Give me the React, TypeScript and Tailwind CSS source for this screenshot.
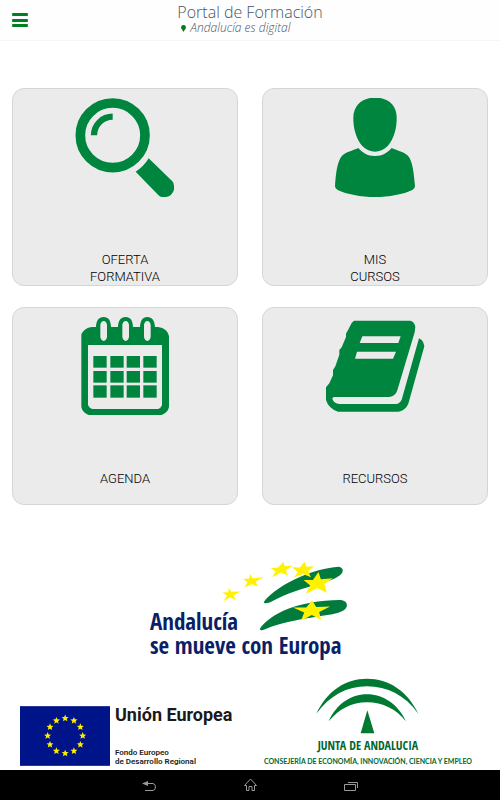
import type { ReactNode } from "react";

const GREEN = "#00853e";

function starPoints(cx: number, cy: number, r: number, tilt = 0, inner = 0.4) {
  return Array.from({ length: 10 }, (_, i) => {
    const a = ((i * 36 - 90 + tilt) * Math.PI) / 180;
    const d = i % 2 ? r * inner : r;
    return `${(cx + d * Math.cos(a)).toFixed(1)},${(cy + d * Math.sin(a)).toFixed(1)}`;
  }).join(" ");
}

function SearchIcon() {
  return (
    <svg viewBox="0 12 390 363" className="h-[121px] w-[130px]" fill={GREEN} aria-hidden="true">
      <circle cx="158" cy="151" r="97" fill="none" stroke={GREEN} strokeWidth="29" />
      <path d="M102 151a56 56 0 0 1 56-56" fill="none" stroke={GREEN} strokeWidth="19" />
      <path d="M266 220 337 289Q342 294 342 303V314Q337 332 318 336H306Q300 336 294 329L227 260Q252 244 266 220Z" />
    </svg>
  );
}

function UserIcon() {
  return (
    <svg viewBox="0 12 390 363" className="h-[121px] w-[130px]" fill={GREEN} aria-hidden="true">
      <path d="M180 39H211C240 44 260 66 260 96C261 128 252 162 233 183C222 195 208 200 195 200C182 200 168 195 157 183C138 162 129 128 130 96C131 66 151 44 180 39Z" />
      <path d="M145 189C158 203 171 213 195 213C219 213 232 203 245 189C263 197 282 201 294 212C309 230 312 270 315 304Q315 311 307 315C280 328 238 336 195 336C152 336 110 328 83 315Q75 311 75 304C77 270 81 230 96 212C108 201 127 197 145 189Z" />
    </svg>
  );
}

function CalendarIcon() {
  return (
    <svg viewBox="0 9 390 363" className="h-[121px] w-[130px]" fill={GREEN} aria-hidden="true">
      <path
        fillRule="evenodd"
        d="M108 66C109 47 116 36 131 36S152 47 153 66H174C175 47 182 36 197 36S218 47 219 66H240C241 47 248 36 262 36S284 47 285 66H294C313 68 324 79 327 94V306C325 317 315 327 304 330H87C76 327 66 317 64 306V88C69 77 80 67 97 66ZM84 120V299Q87 309 98 312H293Q304 309 306 299V120ZM121 59V96Q123 107 131 108Q139 107 141 96V59Q139 49 131 48Q123 49 121 59ZM187 59V96Q189 107 197 108Q205 107 207 96V59Q205 49 197 48Q189 49 187 59ZM252 59V96Q254 107 262 108Q270 107 272 96V59Q270 49 262 48Q254 49 252 59Z"
      />
      {[153, 198, 241].map((y) =>
        [100, 151, 200, 250].map((x) => (
          <rect key={`${x}-${y}`} x={x} y={y} width="40" height={y === 241 ? 37 : 35} />
        )),
      )}
    </svg>
  );
}

function BookIcon() {
  return (
    <svg viewBox="0 9 390 363" className="h-[121px] w-[130px]" fill={GREEN} aria-hidden="true">
      <path
        fillRule="evenodd"
        d="M132 47H301Q313 50 316 65L314 82 262 256Q256 274 238 276H72Q66 277 67 282Q72 295 88 297H258Q269 296 275 284L327 100Q340 105 343 124L295 296Q286 316 266 320H84Q55 310 48 285V247L58 235 69 211V195L76 184 88 149V135L95 127 108 96V86Q116 72 125 54ZM157 94 149 114H265L272 94ZM141 140 135 161H249L258 140Z"
      />
    </svg>
  );
}

function Tile({ icon, children }: { icon: ReactNode; children: ReactNode }) {
  return (
    <button
      type="button"
      className="flex h-[198px] flex-col items-center rounded-xl border border-[#d3d6d9] bg-[#ebebeb] text-[13px] leading-[17px] font-light text-black"
    >
      {icon}
      <span className="mt-[41px]">{children}</span>
    </button>
  );
}

function AndaluciaLogo() {
  return (
    <div className="relative mx-auto h-[100px] w-[200px] pt-[51px] font-['Open_Sans_Condensed','Open_Sans',sans-serif] text-[23px] leading-6 font-bold whitespace-nowrap text-[#0b1f66]">
      <svg
        viewBox="240 25 390 220"
        className="absolute top-0 right-0 h-[73px] w-[130px]"
        aria-hidden="true"
      >
        <path
          d="M371 158C382 140 415 113 465 89C515 65 561 53 597 51Q613 54 608 68C602 80 580 91 548 100C490 116 440 130 389 159Q372 164 371 158Z"
          fill="#007a3d"
        />
        <path
          d="M359 239C370 220 398 199 430 184C480 162 550 151 607 152Q624 156 621 171C618 184 594 192 568 196C500 207 427 216 375 240Q361 246 359 239Z"
          fill="#007a3d"
        />
        <g fill="#fff200">
          <polygon points="265,115 273,127 302,126 280,137 286,151 269,144 249,155 260,139 246,129 264,128" />
          <polygon points="330,73 338,86 371,83 347,96 352,110 334,104 312,114 322,99 309,88 327,87" />
          <polygon points="430,36 434,50 459,48 438,61 443,78 423,69 396,83 407,66 392,56 414,54" />
          <polygon points="494,36 499,51 523,50 505,64 513,83 489,73 462,84 474,67 456,53 480,54" />
          <polygon points="536,67 543,89 579,86 554,103 561,130 533,116 498,133 511,108 491,91 519,91" />
          <polygon points="517,153 529,173 571,171 538,188 544,212 516,197 483,214 493,189 459,174 499,174" />
        </g>
      </svg>
      <p>
        Andalucía
        <br />
        se mueve con Europa
      </p>
    </div>
  );
}

function EuropeanUnionLogo() {
  return (
    <div className="flex h-[60px] gap-[5px]">
      <svg viewBox="0 0 267 177" className="h-[60px] w-[90px] shrink-0" aria-hidden="true">
        <rect width="267" height="177" fill="#001489" />
        {Array.from({ length: 12 }, (_, i) => {
          const a = (i * Math.PI) / 6;
          return (
            <polygon
              key={i}
              points={starPoints(134 + 52 * Math.sin(a), 88 - 52 * Math.cos(a), 11, 0, 0.45)}
              fill="#ffed00"
            />
          );
        })}
      </svg>
      <div className="flex flex-col justify-between font-['Roboto','Liberation_Sans',sans-serif] whitespace-nowrap text-[#1a1a1a]">
        <p className="text-lg leading-[18px] font-bold">Unión Europea</p>
        <p className="text-[8px] leading-[9px] font-semibold">
          Fondo Europeo
          <br />
          de Desarrollo Regional
        </p>
      </div>
    </div>
  );
}

function JuntaLogo() {
  return (
    <div className="flex flex-col items-center whitespace-nowrap text-[#00662f]">
      <svg viewBox="195 24 315 168" className="h-[56px] w-[105px]" fill="#007a33" aria-hidden="true">
        <path d="M199 131C232 62 286 26 351 26S472 62 505 131C466 76 411 49 351 49S240 76 199 131Z" />
        <path d="M236 154C260 102 302 73 351 73S443 102 468 154C438 117 398 97 351 97S268 117 236 154Z" />
        <path d="M352 121 373 190H332Z" />
      </svg>
      <p className="mt-1 font-['Open_Sans_Condensed','Open_Sans',sans-serif] text-xs leading-4 font-light">
        JUNTA DE ANDALUCIA
      </p>
      <p className="mt-[2px] font-['Lato',sans-serif] text-[7px] leading-[10px] font-bold">
        CONSEJERÍA DE ECONOMÍA, INNOVACIÓN, CIENCIA Y EMPLEO
      </p>
    </div>
  );
}

export default function App() {
  return (
    <div className="flex min-h-screen flex-col bg-white font-['Roboto',sans-serif]">
      <header className="grid h-[41px] grid-cols-[1fr_auto_1fr] items-start border-b border-[#f6f6f6] bg-[#fefefe] px-3">
        <button type="button" aria-label="Menú" className="mt-[13px] w-4">
          <svg viewBox="0 0 16 14" className="h-[14px] w-4" fill="#008020" aria-hidden="true">
            <rect width="16" height="3" rx="1" />
            <rect y="6" width="16" height="3" rx="1" />
            <rect y="11" width="16" height="3" rx="1" />
          </svg>
        </button>
        <h1 className="pt-1 font-['Open_Sans',sans-serif] font-light text-[#4a5568]">
          <span className="block text-base leading-[17px]">Portal de Formación</span>
          <span className="flex items-center gap-1 text-xs leading-[14px] italic">
            <svg viewBox="0 0 5 7" className="ml-1 h-[7px] w-[5px]" aria-hidden="true">
              <path d="M2.5 7C2 5 0 4 0 2.400A2.500 2.400 0 0 1 5 2.400C5 4 3 5 2.500 7Z" fill="#087a20" />
            </svg>
            Andalucía es digital
          </span>
        </h1>
      </header>

      <main className="grid grid-cols-2 gap-x-6 gap-y-[21px] px-3 pt-[47px]">
        <Tile icon={<SearchIcon />}>
          OFERTA
          <br />
          FORMATIVA
        </Tile>
        <Tile icon={<UserIcon />}>
          MIS
          <br />
          CURSOS
        </Tile>
        <Tile icon={<CalendarIcon />}>AGENDA</Tile>
        <Tile icon={<BookIcon />}>RECURSOS</Tile>
      </main>

      <footer className="mt-auto">
        <AndaluciaLogo />
        <div className="mt-5 flex items-end justify-between pr-7 pb-1 pl-5">
          <EuropeanUnionLogo />
          <JuntaLogo />
        </div>
      </footer>

      <nav className="flex h-[30px] items-center justify-center gap-[84px] bg-black text-[#9a9a9a]">
        <button type="button" aria-label="Atrás">
          <svg viewBox="0 0 16 16" className="size-4" fill="none" stroke="currentColor" aria-hidden="true">
            <path d="M4 6.500H11Q13.500 7 13.500 10T11 13.500H3" />
            <path d="M0 6.500 6 4V9Z" fill="currentColor" stroke="none" />
          </svg>
        </button>
        <button type="button" aria-label="Inicio">
          <svg viewBox="0 0 16 16" className="size-4" fill="none" stroke="currentColor" aria-hidden="true">
            <path d="M8.500 2 2.500 8.500H4.500V13.500H7V9.500H10V13.500H12.500V8.500H14.500Z" />
          </svg>
        </button>
        <button type="button" aria-label="Recientes">
          <svg viewBox="0 0 16 16" className="size-4" fill="none" stroke="currentColor" aria-hidden="true">
            <path d="M2.500 7.500H13.500V13.500H2.500ZM6 5.500H15.500V11" />
          </svg>
        </button>
      </nav>
    </div>
  );
}
